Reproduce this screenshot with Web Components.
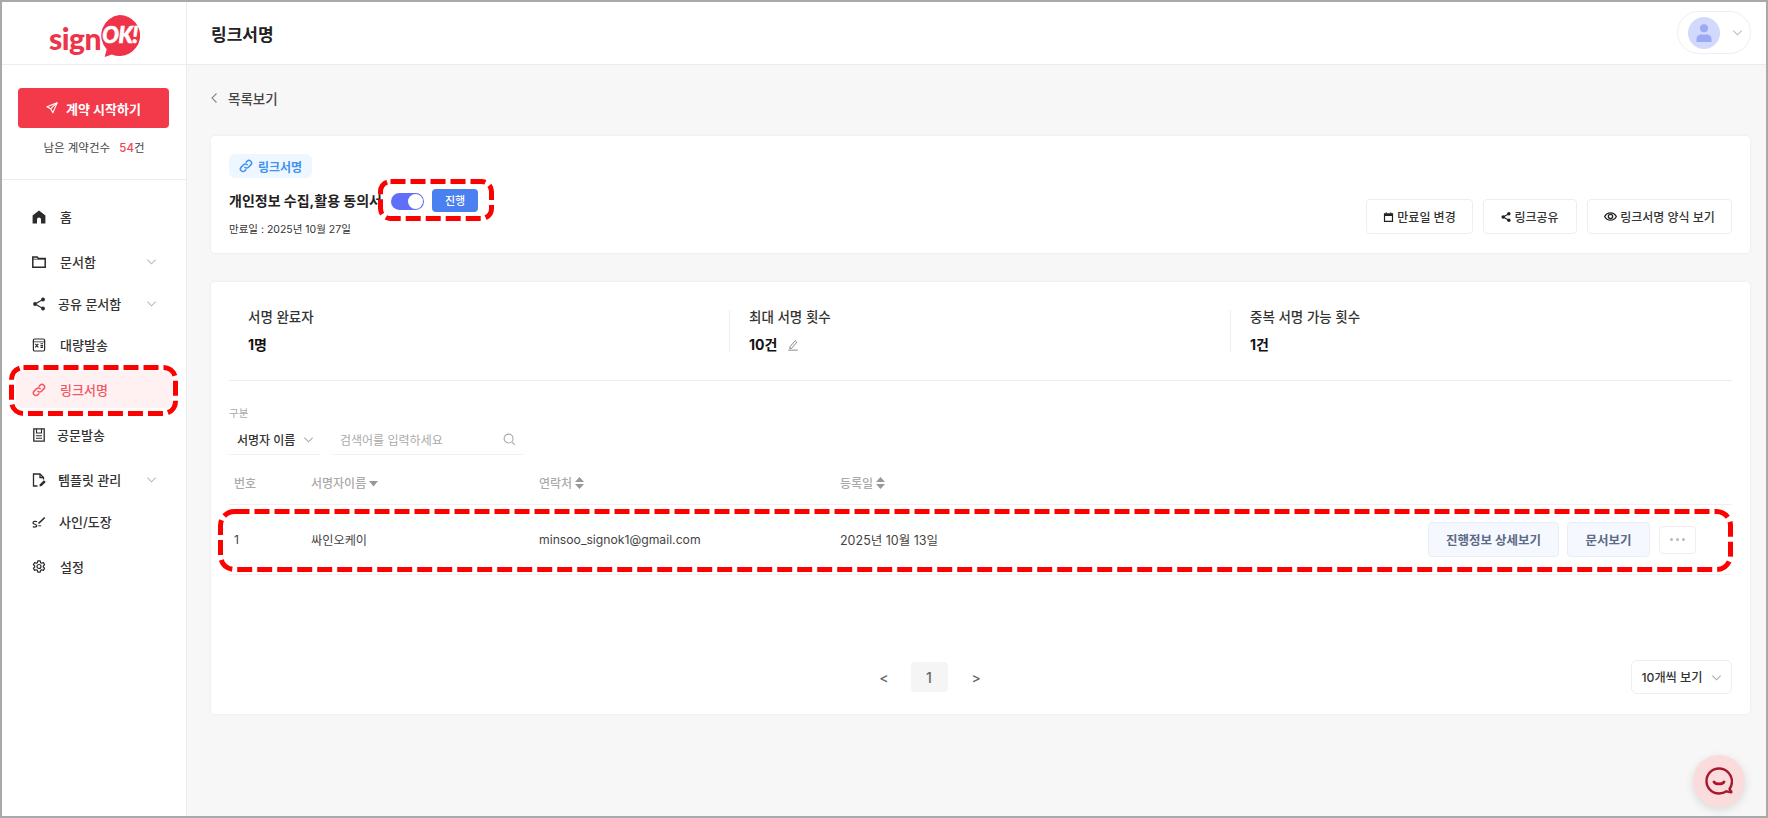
<!DOCTYPE html>
<html lang="ko"><head><meta charset="utf-8"><title>링크서명</title>
<style>
html,body{margin:0;padding:0;background:#f7f7f7}
body{font-family:Inter,"Noto Sans CJK KR",sans-serif;color:#222}
</style></head><body>
<sign-app></sign-app>
<script>
const icons={
home:'<svg viewBox="0 0 14 14" width="14" height="14"><path fill="currentColor" d="M7 .5 .6 5.600V13.500H5V9.500A2 2 0 0 1 9 9.500V13.500H13.400V5.600z"/></svg>',
folder:'<svg viewBox="0 0 14 14" width="14" height="14" fill="none" stroke="currentColor" stroke-width="1.500"><path d="M.8 2h4.400l1.200 1.500h6.800v8.700H.8z"/><path d="M.8 4.200h12.400" stroke-width=".8"/></svg>',
share:'<svg viewBox="0 0 14 14" width="14" height="14"><path d="M11 2.500 3 7l8 4.500" fill="none" stroke="currentColor" stroke-width="1.200"/><circle cx="11" cy="2.500" r="1.900" fill="currentColor"/><circle cx="3" cy="7" r="1.900" fill="currentColor"/><circle cx="11" cy="11.500" r="1.900" fill="currentColor"/></svg>',
bulk:'<svg viewBox="0 0 14 14" width="14" height="14" fill="none" stroke="currentColor" stroke-width="1.200"><path d="M2.600 1h8.800a1.200 1.200 0 0 1 1.200 1.200v9.600a1.200 1.200 0 0 1-1.200 1.200H2.600a1.200 1.200 0 0 1-1.200-1.200V2.200A1.200 1.200 0 0 1 2.600 1z"/><path d="M.8 3.800h12.400" stroke-width=".8"/><path d="M3.300 5.800l3 3.600M6.300 5.800l-3 3.600M8.500 5.800h2.500M8.500 7.600h2.500M8.500 9.400h2.500" stroke-width="1.100"/></svg>',
link:'<svg viewBox="0 0 14 14" width="14" height="14" fill="none" stroke="currentColor" stroke-width="1.500" stroke-linecap="round"><path d="M5.800 8.200a2.600 2.600 0 0 0 3.700 0l2.300-2.300a2.600 2.600 0 0 0-3.700-3.700L7.200 3.100"/><path d="M8.200 5.800a2.600 2.600 0 0 0-3.700 0L2.200 8.100a2.600 2.600 0 0 0 3.700 3.700l.9-.9"/></svg>',
doc:'<svg viewBox="0 0 14 14" width="14" height="14" fill="none" stroke="currentColor" stroke-width="1.300"><path d="M1.800.8h10.400v12.400H1.800z"/><path d="M4.500 .8v4.200h5V.8M4 7.800h6M4 10.300h6" stroke-width="1.100"/></svg>',
tmpl:'<svg viewBox="0 0 14 14" width="14" height="14" fill="none" stroke="currentColor" stroke-width="1.300"><path d="M5.500 13H1.500V1h6.500l3.500 3.500v2"/><path d="M8 1v3.500h3.500"/><path d="M7.500 13.500l.4-2.300 4-4 1.800 1.800-4 4z" fill="currentColor" stroke="none"/></svg>',
sign:'<svg viewBox="0 0 14 14" width="14" height="14" fill="none" stroke="currentColor" stroke-width="1.300"><path d="M5 6.800C3.500 5.900 1 6.300 1 8c0 1.500 3.700 1 3.700 2.700 0 1.300-2 1.800-3.900 1"/><path d="M6.500 8.500 12.800 2.500" stroke-width="1.700"/><path d="M6.300 10.800h2.800" stroke-width="1"/></svg>',
gear:'<svg viewBox="0 0 14 14" width="14" height="14" fill="none" stroke="currentColor" stroke-width="1.200" stroke-linejoin="round"><path d="M5.800.8h2.400l.4 1.800 1.100.6 1.700-.6 1.200 2.100-1.300 1.200v1.200l1.300 1.200-1.200 2.100-1.700-.6-1.100.6-.4 1.800H5.800l-.4-1.800-1.100-.6-1.700.6-1.200-2.100 1.300-1.200V5.900L1.400 4.700l1.200-2.100 1.700.6 1.100-.6z"/><circle cx="7" cy="6.500" r="2"/></svg>',
chev:'<svg viewBox="0 0 12 12" width="11" height="11" fill="none" stroke="currentColor" stroke-width="1.200"><path d="M1.500 4 6 8.500 10.500 4"/></svg>',
plane:'<svg viewBox="0 0 14 14" width="12" height="12" fill="none" stroke="currentColor" stroke-width="1.300" stroke-linejoin="round"><path d="M13 1 1 5.500l4.500 2.300L8 12.500z"/><path d="M13 1 5.500 7.800"/></svg>',
cal:'<svg viewBox="0 0 12 12" width="11" height="12"><path fill="#222" d="M1 2h2V.7h1V2h4V.7h1V2h2v9.500H1zm1.300 3v5.200h7.400V5z"/></svg>',
eye:'<svg viewBox="0 0 14 14" width="13" height="13" fill="none" stroke="#222" stroke-width="1.400"><path d="M.7 7C2 4.500 4.300 3 7 3s5 1.500 6.300 4C12 9.500 9.700 11 7 11S2 9.500.7 7z"/><circle cx="7" cy="7" r="2.300"/></svg>',
shareS:'<svg viewBox="0 0 14 14" width="10" height="10"><path d="M11 2.500 3 7l8 4.500" fill="none" stroke="#222" stroke-width="1.600"/><circle cx="11" cy="2.500" r="2.400" fill="#222"/><circle cx="3" cy="7" r="2.400" fill="#222"/><circle cx="11" cy="11.500" r="2.400" fill="#222"/></svg>',
pen:'<svg viewBox="0 0 14 14" width="12" height="12" fill="none" stroke="#777" stroke-width="1"><path d="M3.500 9 9.500 2l2 1.700-6 7-2.300.6zM1.500 13h11"/></svg>',
search:'<svg viewBox="0 0 14 14" width="13" height="13" fill="none" stroke="#aaa" stroke-width="1.200"><circle cx="6" cy="6" r="4.800"/><path d="m9.500 9.500 3.300 3.300"/></svg>',
sortBoth:'<svg viewBox="0 0 9 12" width="9" height="12"><path fill="#999" d="M4.500 0 9 5H0zM0 7h9l-4.500 5z"/></svg>',
sortDown:'<svg viewBox="0 0 9 6" width="9" height="6"><path fill="#999" d="M0 0h9L4.500 5.500z"/></svg>'
};
function def(name,css,html,extra){
  const t=document.createElement('template');
  t.innerHTML=`<style>${css}</style>${html}`;
  customElements.define(name,class extends HTMLElement{
    constructor(){super();this.attachShadow({mode:'open'}).appendChild(t.content.cloneNode(true));}
    connectedCallback(){if(extra)extra(this,this.shadowRoot);}
  });
}
def('dash-box',`:host{display:block;position:absolute;pointer-events:none;z-index:5}svg{display:block;width:100%;height:100%;overflow:visible}`,`<svg><rect fill="none" stroke="#f00" stroke-width="5" stroke-dasharray="15 5"/></svg>`,(h,r)=>{
  const w=+h.getAttribute('w'),ht=+h.getAttribute('h'),rad=h.getAttribute('r')||12;
  h.style.left=h.getAttribute('x')+'px';h.style.top=h.getAttribute('y')+'px';h.style.width=w+'px';h.style.height=ht+'px';
  const c=r.querySelector('rect');c.setAttribute('x',2.5);c.setAttribute('y',2.5);c.setAttribute('width',w-5);c.setAttribute('height',ht-5);c.setAttribute('rx',rad);
});
def('nav-item',`:host{display:flex;align-items:center;height:37px;padding-left:16px;border-radius:6px;color:#333;font-size:13px;font-weight:500;margin-top:var(--mt,0);box-sizing:border-box;position:relative}
:host([active]){background:#fff0f1;color:#f35565}
.i{width:14px;height:14px;display:flex;color:#2b2b2b}:host([active]) .i{color:#f35565}
.t{margin-left:var(--tx,15px);white-space:nowrap}.c{position:absolute;left:130px;top:13px;color:#bbb;display:flex}`,
`<span class="i"></span><span class="t"><slot></slot></span><span class="c"></span>`,(h,r)=>{
  r.querySelector('.i').innerHTML=icons[h.getAttribute('icon')];
  if(h.hasAttribute('more'))r.querySelector('.c').innerHTML=icons.chev;
});
def('side-bar',`:host{display:block;width:184px;flex:none;background:#fff;border-right:1px solid #ececec}
.logo{height:62px;border-bottom:1px solid #ececec;display:flex;justify-content:center;padding-left:2px;position:relative}
.cta{margin:23px 17px 0 16px;height:40px;background:#f23a4b;border-radius:4px;color:#fff;font-size:13px;font-weight:700;display:flex;align-items:center;justify-content:center;gap:8px}
.left{font-size:11.500px;color:#444;text-align:center;margin-top:11px;line-height:18px;padding-bottom:22px;border-bottom:1px solid #ececec}
.left b{font-weight:500;color:#f4404f;margin-left:6px}.left span{color:#444}
nav{padding:18px 14px 0 14px;display:block}`,
`<div class="logo"><sign-logo></sign-logo></div>
<div class="cta"><span id="pl" style="display:flex"></span>계약 시작하기</div>
<div class="left">남은 계약건수 <b>54</b><span>건</span></div>
<nav>
<nav-item icon="home" style="--tx:14px">홈</nav-item>
<nav-item icon="folder" more style="--mt:8px;--tx:14px">문서함</nav-item>
<nav-item icon="share" more style="--mt:5px;--tx:12px">공유 문서함</nav-item>
<nav-item icon="bulk" style="--mt:4px;--tx:14px">대량발송</nav-item>
<nav-item icon="link" active style="--mt:8px;--tx:14px">링크서명</nav-item>
<nav-item icon="doc" style="--mt:8px;--tx:11px">공문발송</nav-item>
<nav-item icon="tmpl" more style="--mt:8px;--tx:12px">템플릿 관리</nav-item>
<nav-item icon="sign" style="--mt:5px;--tx:13px">사인/도장</nav-item>
<nav-item icon="gear" style="--mt:8px;--tx:14px">설정</nav-item>
</nav>`,(h,r)=>{r.getElementById('pl').innerHTML=icons.plane});
def('sign-logo',`:host{display:block;position:relative;width:92px;height:62px;color:#ef3349}
.s{position:absolute;left:0;top:18px;font:900 30px/36px Lato,"Open Sans",sans-serif;letter-spacing:-.5px}
svg{position:absolute;left:50px;top:13px}
.k{position:absolute;left:50px;top:21px;width:42px;text-align:center;font:italic 900 22px/24px Lato,sans-serif;color:#fff;letter-spacing:-.5px;white-space:nowrap;-webkit-text-stroke:.6px #fff}`,
`<span class="s">sign</span><svg width="41" height="43" viewBox="0 0 40 42"><path fill="#ef3349" d="M20 0a20 20 0 1 1-7.500 38.500L5.500 41l2-7.500A20 20 0 0 1 20 0z"/></svg><span class="k">OK!</span>`);
def('top-bar',`:host{display:flex;align-items:center;justify-content:space-between;height:62px;background:#fff;border-bottom:1px solid #ececec;padding:0 15px 0 24px;flex:none}
h1{margin:0;font-size:17px;font-weight:700;color:#222}
.pill{width:62px;height:41px;border:1px solid #eee;border-radius:22px;display:flex;align-items:center;padding-left:10px;gap:12px;color:#bbb;margin-top:-1px}
.av{width:32px;height:32px;border-radius:50%;background:#d3d9fc;display:flex;align-items:center;justify-content:center;flex:none}`,
`<h1><slot></slot></h1><div class="pill"><div class="av"><svg width="16" height="18" viewBox="0 0 16 18"><circle cx="8" cy="4.200" r="4" fill="#9caaf6"/><path fill="#9caaf6" d="M.5 18v-3c0-3 2.500-4.500 4.500-4.500h6c2 0 4.500 1.500 4.500 4.500v3z"/></svg></div><span id="c" style="display:flex"></span></div>`,(h,r)=>{r.getElementById('c').innerHTML=icons.chev});
def('back-link',`:host{display:flex;align-items:center;height:24px;gap:11px;font-size:13.500px;font-weight:500;color:#444;margin:21px 0 26px}`,
`<svg width="6" height="10" viewBox="0 0 6 10" fill="none" stroke="#888" stroke-width="1.100"><path d="M5.500.5 1 5l4.500 4.500"/></svg><slot></slot>`);
def('ui-card',`:host{display:block;background:#fff;border-radius:4px;box-shadow:0 0 3px rgba(0,0,0,.07);box-sizing:border-box;padding:var(--p,18px)}`,`<slot></slot>`);
def('out-btn',`:host{display:inline-flex;align-items:center;justify-content:center;gap:3px;height:35px;border:1px solid #eee;border-radius:4px;background:#fff;font-size:12px;font-weight:500;color:#333;box-sizing:border-box;white-space:nowrap}`,
`<span id="i" style="display:flex"></span><slot></slot>`,(h,r)=>{r.getElementById('i').innerHTML=icons[h.getAttribute('icon')]});
def('info-head',`:host{display:flex;justify-content:space-between;align-items:flex-start;height:117px;padding:18px 18px 19px;box-sizing:border-box;position:relative}
.chip{display:inline-flex;align-items:center;gap:5px;height:24px;padding:0 10px;background:#eef6ff;border-radius:6px;color:#3f92f2;font-size:12px;font-weight:700;box-sizing:border-box;width:83px;white-space:nowrap}
.row{display:flex;align-items:center;height:24px;margin-top:10px}
.title{font-size:14px;font-weight:700;color:#222;width:149px;white-space:nowrap}
.tg{width:33px;height:17px;border-radius:9px;background:#606ffa;margin:2px 0 0 13px;position:relative;flex:none}
.tg i{position:absolute;right:1px;top:1px;width:15px;height:15px;border-radius:50%;background:#fff;box-shadow:0 0 0 .5px #606ffa}
.bd{width:46px;height:23px;background:#4a80ef;border-radius:4px;color:#fff;font-size:11px;font-weight:500;display:flex;align-items:center;justify-content:center;margin-left:8px}
.dt{font-size:10.500px;color:#333;margin-top:10px;line-height:16px}
.btns{display:flex;gap:10px;align-self:flex-end}`,
`<div><div class="chip"><span id="l" style="display:flex"></span>링크서명</div>
<div class="row"><span class="title">개인정보 수집,활용 동의서</span><span class="tg"><i></i></span><span class="bd">진행</span></div>
<div class="dt">만료일 : 2025년 10월 27일</div></div>
<div class="btns"><out-btn icon="cal" style="width:107px">만료일 변경</out-btn><out-btn icon="shareS" style="width:94px">링크공유</out-btn><out-btn icon="eye" style="width:145px">링크서명 양식 보기</out-btn></div>`,(h,r)=>{r.getElementById('l').innerHTML=icons.link});
def('stat-cell',`:host{display:block;padding-left:19px;height:42px;box-sizing:border-box}
:host(:not(:last-child)){border-right:1px solid #eee}
.a{font-size:13.500px;color:#333;font-weight:500;line-height:18px;margin-top:-2px}.b{font-size:14px;font-weight:700;color:#111;line-height:20px;margin-top:9px;display:flex;align-items:center;gap:10px}`,
`<div class="a"><slot name="l"></slot></div><div class="b"><slot></slot><span id="p" style="display:flex"></span></div>`,(h,r)=>{if(h.hasAttribute('edit'))r.getElementById('p').innerHTML=icons.pen});
def('stat-row',`:host{display:grid;grid-template-columns:repeat(3,1fr);padding-bottom:28px;border-bottom:1px solid #eee;padding-top:10px}`,`<slot></slot>`);
def('filter-bar',`:host{display:block;margin-top:26px}
.lb{font-size:10.500px;color:#aaa;line-height:14px}
.r{display:flex;margin-top:3px;gap:13px}
.sel{width:91px;height:31px;border-bottom:1px solid #f2f2f2;display:flex;align-items:center;font-size:12px;font-weight:500;color:#333;padding-left:8px;box-sizing:border-box;gap:8px;white-space:nowrap}
.sel span{display:flex;color:#aaa}
.in{width:190px;height:31px;border-bottom:1px solid #f2f2f2;display:flex;align-items:center;justify-content:space-between;font-size:12px;color:#aaa;padding:0 7px;box-sizing:border-box}`,
`<div class="lb">구분</div><div class="r"><div class="sel">서명자 이름<span id="c"></span></div><div class="in">검색어를 입력하세요<span id="s" style="display:flex"></span></div></div>`,(h,r)=>{r.getElementById('c').innerHTML=icons.chev;r.getElementById('s').innerHTML=icons.search});
def('data-table',`:host{display:block;font-size:12px;color:#444}
.g{display:grid;grid-template-columns:77px 228px 301px 1fr;padding-left:5px;align-items:center}
.h{height:50px;color:#aaa;font-size:12px;font-weight:500;border-bottom:1px solid #f0f0f0;box-sizing:border-box;padding-top:6px}
.h div{display:flex;align-items:center;gap:3px}
.d{height:70px;border-bottom:1px solid #f0f0f0;box-sizing:border-box;font-size:12.200px;color:#444}
.last{display:flex;justify-content:space-between;align-items:center;font-size:12.500px}
.acts{display:flex;align-items:center;gap:8px;margin-right:9px}
.ab{height:35px;border:1px solid #e9edf5;background:#f5f8fe;border-radius:4px;color:#5b6a85;font-size:12.500px;font-weight:700;display:flex;align-items:center;justify-content:center;box-sizing:border-box;white-space:nowrap}
.m{width:37px;height:28px;margin-right:36px;border:1px solid #eee;border-radius:4px;background:#fff;display:flex;align-items:center;justify-content:center;gap:3px;box-sizing:border-box;flex:none}
.m i{width:3px;height:3px;border-radius:50%;background:#bbb}
.end{display:flex;align-items:center}`,
`<div class="g h"><div>번호</div><div>서명자이름<span id="a" style="display:flex;margin-top:3px"></span></div><div>연락처<span id="b" style="display:flex"></span></div><div>등록일<span id="c" style="display:flex"></span></div></div>
<div class="g d"><div>1</div><div>싸인오케이</div><div>minsoo_signok1@gmail.com</div><div class="last"><span>2025년 10월 13일</span><span class="end"><span class="acts"><span class="ab" style="width:131px">진행정보 상세보기</span><span class="ab" style="width:83px">문서보기</span></span><span class="m"><i></i><i></i><i></i></span></span></div></div>`,(h,r)=>{r.getElementById('a').innerHTML=icons.sortDown;r.getElementById('b').innerHTML=icons.sortBoth;r.getElementById('c').innerHTML=icons.sortBoth});
def('pager-bar',`:host{display:flex;align-items:center;justify-content:center;position:relative;height:34px;margin-top:85px;padding-right:101px;color:#666;font-size:14px;font-weight:500}
.p{width:37px;height:30px;background:#f5f5f5;border-radius:4px;display:flex;align-items:center;justify-content:center;margin:0 24px 0 22px}
.s{position:absolute;right:0;top:0;width:101px;height:34px;border:1px solid #eee;border-radius:6px;display:flex;align-items:center;justify-content:center;gap:8px;font-size:12.200px;color:#333;box-sizing:border-box;white-space:nowrap}
.s span{display:flex;color:#aaa}`,
`<span>&lt;</span><span class="p">1</span><span>&gt;</span><div class="s">10개씩 보기<span id="c"></span></div>`,(h,r)=>{r.getElementById('c').innerHTML=icons.chev});
def('chat-fab',`:host{display:flex;position:absolute;width:52px;height:52px;border-radius:50%;background:#fbdcdc;box-shadow:0 3px 10px rgba(0,0,0,.12);align-items:center;justify-content:center}`,
`<svg width="28" height="28" viewBox="0 0 28 28" fill="none" stroke="#a6182d" stroke-width="2.400" stroke-linecap="round" stroke-linejoin="round"><path d="M14 1.500C7 1.500 1.500 7 1.500 14S7 26.500 14 26.500c3 0 5.500-.8 7.500-2.200l4.500 1c.5 0 .5-.5 .2-.8l-1.700-2.500c1.500-2 2.500-4.800 2.500-8C26.500 7 21 1.500 14 1.500z"/><path d="M9 15c1.500 2.500 8.500 2.500 10 0" stroke-width="2.800"/></svg>`);
def('sign-app',`:host{display:flex;width:1768px;height:818px;border:2px solid #a9a9a9;box-sizing:border-box;position:relative;overflow:hidden;background:#f7f7f7}
.m{flex:1;display:flex;flex-direction:column;min-width:0}
.c{padding:0 16px 0 24px;flex:1}
.hl{position:absolute;left:-2px;top:-2px;width:0;height:0}`,
`<side-bar></side-bar>
<div class="m"><top-bar>링크서명</top-bar>
<div class="c"><back-link>목록보기</back-link>
<ui-card style="--p:0;height:117px"><info-head></info-head></ui-card>
<ui-card style="margin-top:29px;height:432px">
<stat-row><stat-cell><span slot="l">서명 완료자</span>1명</stat-cell><stat-cell edit><span slot="l">최대 서명 횟수</span>10건</stat-cell><stat-cell><span slot="l">중복 서명 가능 횟수</span>1건</stat-cell></stat-row>
<filter-bar></filter-bar><data-table></data-table><pager-bar></pager-bar>
</ui-card></div></div>
<div class="hl"><dash-box x="9" y="365" w="169" h="51"></dash-box><dash-box x="378" y="179" w="116" h="42" r="10"></dash-box><dash-box x="218" y="509" w="1515" h="63" r="14"></dash-box></div>
<chat-fab style="left:1691px;top:753px"></chat-fab>`);
</script>
</body></html>
